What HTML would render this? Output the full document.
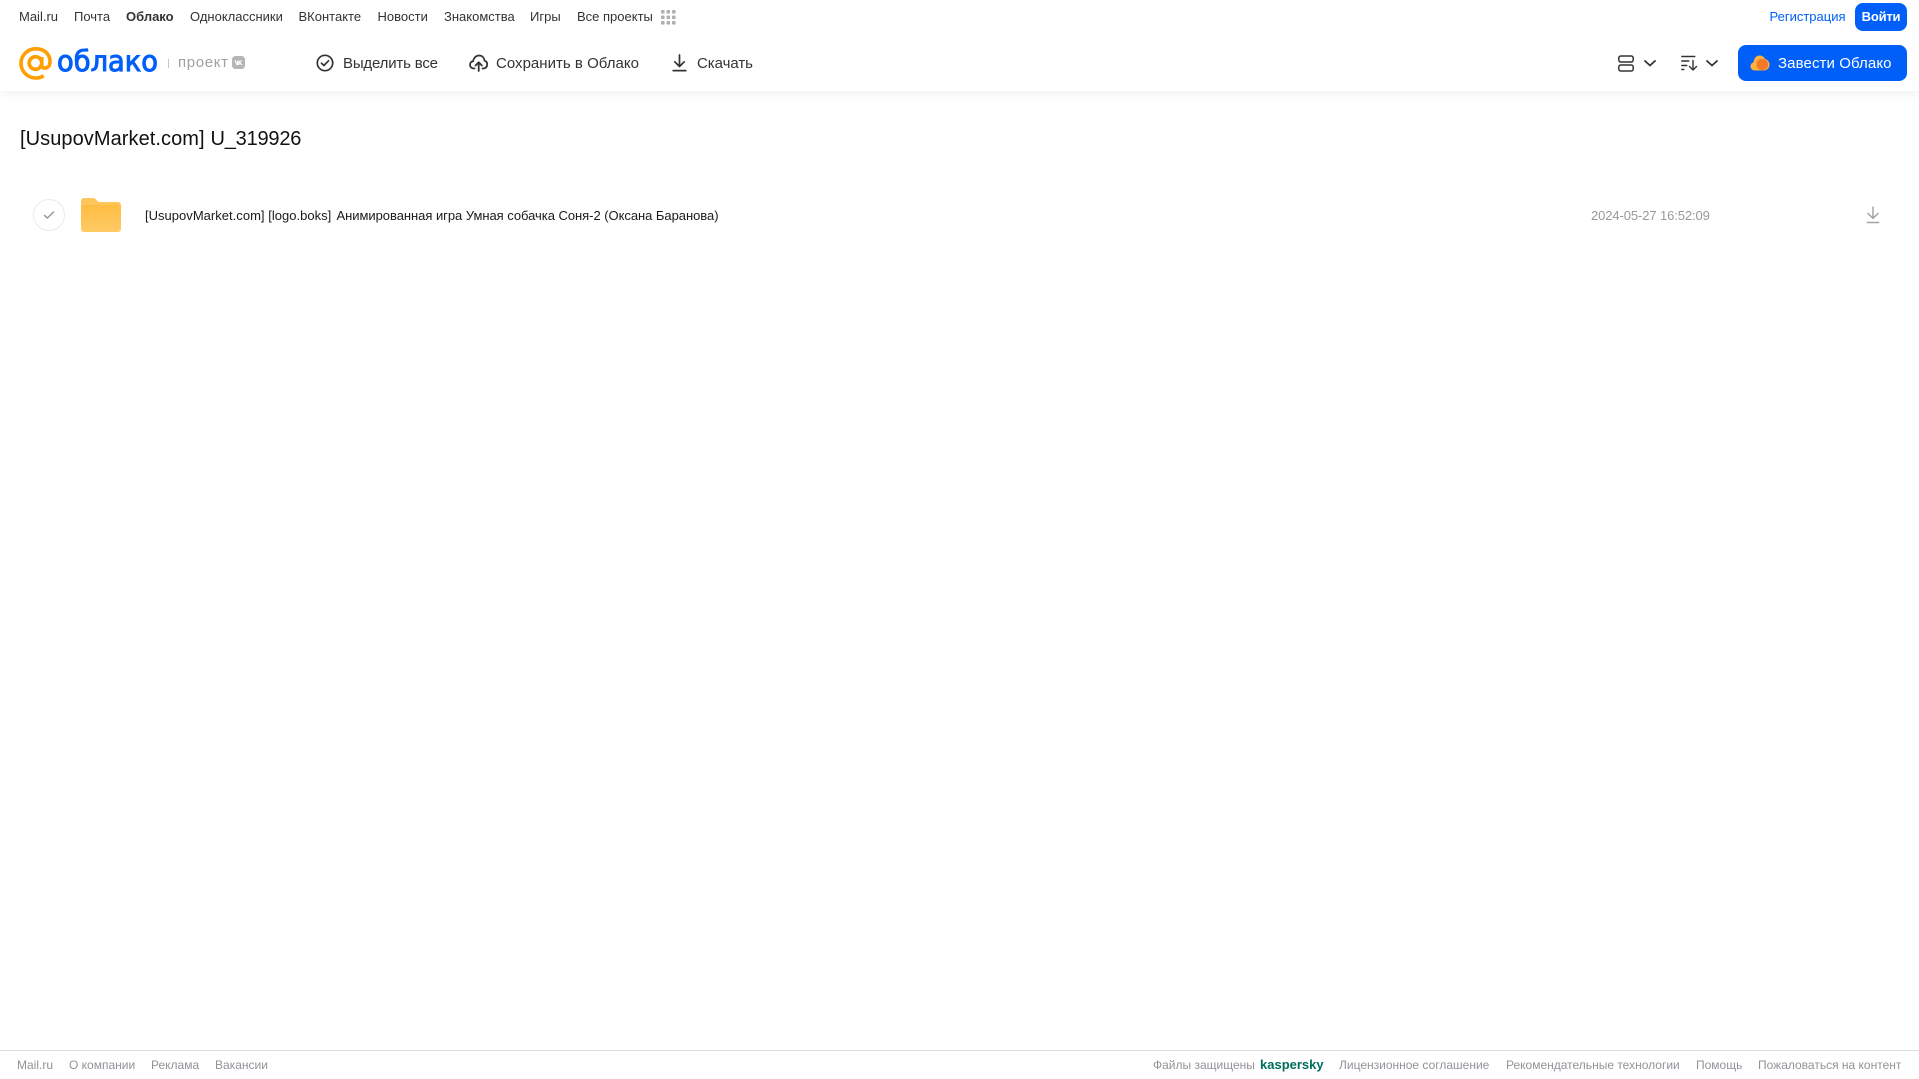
<!DOCTYPE html>
<html lang="ru"><head><meta charset="utf-8"><title>Облако</title>
<style>
html,body{margin:0;padding:0;width:1919px;height:1079px;overflow:hidden;background:#fff;font-family:"Liberation Sans",Arial,sans-serif}
.a{position:absolute;white-space:nowrap}
.n{top:9px;font-size:13px;line-height:16px;color:#333}
.t{top:55px;font-size:15px;line-height:18px;color:#333}
.f{top:1058px;font-size:12px;line-height:14px;color:#919399}
svg{position:absolute;overflow:visible}
</style></head><body>
<div class="a" style="left:0;top:0;width:1919px;height:91px;background:#fff;box-shadow:0 2px 10px rgba(0,0,0,.07)"></div>
<span class="a n" style="left:19px">Mail.ru</span>
<span class="a n" style="left:74px">Почта</span>
<span class="a n" style="left:126px;font-weight:bold">Облако</span>
<span class="a n" style="left:190px">Одноклассники</span>
<span class="a n" style="left:298.500px">ВКонтакте</span>
<span class="a n" style="left:377.500px">Новости</span>
<span class="a n" style="left:444px">Знакомства</span>
<span class="a n" style="left:530px">Игры</span>
<span class="a n" style="left:577px">Все проекты</span>
<svg style="left:661px;top:10px" width="15" height="15" fill="#b0b0b0"><rect x="0" y="0" width="3.6" height="3.6" rx="1"/><rect x="5.5" y="0" width="3.6" height="3.6" rx="1"/><rect x="11" y="0" width="3.6" height="3.6" rx="1"/><rect x="0" y="5.5" width="3.6" height="3.6" rx="1"/><rect x="5.5" y="5.5" width="3.6" height="3.6" rx="1"/><rect x="11" y="5.5" width="3.6" height="3.6" rx="1"/><rect x="0" y="11" width="3.6" height="3.6" rx="1"/><rect x="5.5" y="11" width="3.6" height="3.6" rx="1"/><rect x="11" y="11" width="3.6" height="3.6" rx="1"/></svg>

<!-- logo -->
<svg style="left:19px;top:47px" width="33" height="33" viewBox="0 0 33 33" fill="none" stroke="#ff9e00" stroke-width="3.6"><circle cx="16.500" cy="16" r="6.300"/><path d="M22.800 10v8.400c0 3.600 5.600 3.600 7.600-.2 2.400-7.400-2.400-16.400-13.600-16.400C8.600 1.800 2 8.200 2 16.200c0 8.400 6.800 14.800 14.800 14.800 3 0 5.600-.8 7.800-2.200"/></svg>
<svg style="left:57px;top:42px" width="104" height="40"><text x="0" y="29" font-family="DejaVu Sans,sans-serif" font-size="28.500" fill="#005ff9" stroke="#005ff9" stroke-width="1" textLength="101" lengthAdjust="spacingAndGlyphs">облако</text></svg>
<div class="a" style="left:168px;top:59px;width:1px;height:9px;background:#c4c4c4"></div>
<span class="a" style="left:178px;top:54px;font-size:15px;line-height:18px;color:#a0a0a0;letter-spacing:.65px">проект</span>
<svg style="left:232px;top:56px" width="13" height="13"><rect width="13" height="13" rx="3.500" fill="#b5b5b5"/><path d="M3 4.500l1.800 4h.8V4.500M9.800 4.500L7.500 6.500l2.500 2.500M7 4.500v4.500" stroke="#fff" stroke-width="1.100" fill="none"/></svg>

<!-- toolbar -->
<svg style="left:316px;top:54px" width="18" height="18" fill="none" stroke="#333" stroke-width="1.700"><circle cx="9" cy="9" r="7.700"/><path d="M5.500 9.200l2.400 2.300 4.600-4.700" stroke-linecap="round" stroke-linejoin="round"/></svg>
<span class="a t" style="left:343px;letter-spacing:-.18px">Выделить все</span>
<svg style="left:469px;top:54px" width="19" height="18" fill="none" stroke="#333" stroke-width="1.800" stroke-linecap="round" stroke-linejoin="round"><path d="M5.500 14.500H4.800C2.500 14.500 1 12.800 1 10.800c0-1.900 1.300-3.300 3.100-3.600C4.600 4 7 1.500 10 1.500c3.200 0 5.200 2.200 5.600 5.200 1.700.5 2.600 2 2.600 3.700 0 2.200-1.500 4.100-3.900 4.100h-.8"/><path d="M9.700 17V8.500M6.500 11.500l3.200-3.200 3.200 3.200"/></svg>
<span class="a t" style="left:496px;letter-spacing:.02px">Сохранить в Облако</span>
<svg style="left:671.500px;top:54px" width="15" height="18" fill="none" stroke="#333" stroke-width="1.700" stroke-linecap="round" stroke-linejoin="round"><path d="M7.500 1v11M2.800 7.800l4.700 4.700 4.700-4.700"/><path d="M1.200 16.600h12.600"/></svg>
<span class="a t" style="left:697px;letter-spacing:-.05px">Скачать</span>

<!-- right side -->
<span class="a n" style="left:1769.500px;color:#005ff9">Регистрация</span>
<div class="a" style="left:1855px;top:3px;width:52px;height:28px;border-radius:8px;background:#005ff9;color:#fff;font-size:13px;line-height:28px;text-align:center;font-weight:bold;letter-spacing:-.2px">Войти</div>
<svg style="left:1618px;top:55px" width="16" height="17" fill="none" stroke="#333" stroke-width="1.500"><rect x=".8" y="1" width="14.400" height="6" rx="2"/><rect x=".8" y="10" width="14.400" height="6" rx="2"/></svg>
<svg style="left:1644px;top:60px" width="12" height="7" fill="none" stroke="#333" stroke-width="1.800" stroke-linecap="round" stroke-linejoin="round"><path d="M1 1l5 4.500L11 1"/></svg>
<svg style="left:1681px;top:55px" width="17" height="16" fill="none" stroke="#333" stroke-width="1.400" stroke-linecap="round" stroke-linejoin="round"><path d="M.8 1.500h13M.8 6h7M.8 10.500h5M.8 14.500h2"/><path d="M12 5.500v9.500M8.500 11.500l3.500 3.500 3.500-3.500"/></svg>
<svg style="left:1706px;top:60px" width="12" height="7" fill="none" stroke="#333" stroke-width="1.800" stroke-linecap="round" stroke-linejoin="round"><path d="M1 1l5 4.500L11 1"/></svg>
<div class="a" style="left:1738px;top:45px;width:169px;height:36px;border-radius:8px;background:#005ff9"></div>
<svg style="left:1750px;top:54px" width="20" height="17"><path d="M5 16.500C2 16.500 .5 14.500 .5 12.300c0-2 1.300-3.500 3-3.900C4 4 6.500 1.500 9.500 1.500c2.500 0 4.500 1.300 5.500 3.500 2.800.5 4.500 3 4.500 5.800 0 3.200-2.500 5.700-5.500 5.700z" fill="#ffb13d"/><circle cx="12.300" cy="10.500" r="5.800" fill="#f5792a"/></svg>
<span class="a" style="left:1778px;top:55px;font-size:15px;line-height:18px;color:#fff;letter-spacing:.1px">Завести Облако</span>

<!-- content -->
<div class="a" style="left:20px;top:125.500px;font-size:20px;line-height:26px;color:#111;letter-spacing:.07px">[UsupovMarket.com]</div>
<div class="a" style="left:210.500px;top:125.500px;font-size:20px;line-height:26px;color:#111;letter-spacing:-.2px">U_319926</div>
<div class="a" style="left:33px;top:199px;width:30px;height:30px;border:1px solid #ebebeb;border-radius:50%"></div>
<svg style="left:43px;top:210px" width="12" height="10" fill="none" stroke="#999" stroke-width="1.500" stroke-linecap="round" stroke-linejoin="round"><path d="M1.500 5.500L4.500 8l6-6"/></svg>
<svg style="left:81px;top:198px" width="40" height="34"><defs><linearGradient id="g" x1="0" y1="0" x2="0" y2="1"><stop offset="0" stop-color="#ffbc42"/><stop offset="1" stop-color="#ffcb66"/></linearGradient></defs><path d="M0 3a3 3 0 0 1 3-3h9c2 0 3 1 4 2.500L18 4h19a3 3 0 0 1 3 3v10H0z" fill="#ffc65c"/><path d="M0 9a2 2 0 0 1 2-2h36a2 2 0 0 1 2 2v22a3 3 0 0 1-3 3H3a3 3 0 0 1-3-3z" fill="url(#g)"/></svg>
<span class="a" style="left:145px;top:208px;font-size:13px;line-height:16px;color:#1a1a1a;letter-spacing:.02px">[UsupovMarket.com] [logo.boks]</span>
<span class="a" style="left:336.500px;top:208px;font-size:13px;line-height:16px;color:#1a1a1a;letter-spacing:-.04px">Анимированная игра Умная собачка Соня-2 (Оксана Баранова)</span>
<span class="a" style="left:1591px;top:208px;font-size:13px;line-height:16px;color:#999;letter-spacing:-.1px">2024-05-27 16:52:09</span>
<svg style="left:1866px;top:206px" width="14" height="18" fill="none" stroke="#a5a5a5" stroke-width="1.500"><path d="M7 .5v11.500M1.500 7L7 12.300 12.500 7"/><path d="M.8 16.500h12.400"/></svg>

<!-- footer -->
<div class="a" style="left:0;top:1050px;width:1919px;height:1px;background:#dcdcdc"></div>
<span class="a f" style="left:17px">Mail.ru</span>
<span class="a f" style="left:69px">О компании</span>
<span class="a f" style="left:151px">Реклама</span>
<span class="a f" style="left:215px">Вакансии</span>
<span class="a f" style="left:1153px">Файлы защищены</span>
<span class="a f" style="left:1260px;color:#006d5c;font-weight:bold;font-size:13px">kaspersky</span>
<span class="a f" style="left:1339px">Лицензионное соглашение</span>
<span class="a f" style="left:1506px">Рекомендательные технологии</span>
<span class="a f" style="left:1696px">Помощь</span>
<span class="a f" style="left:1758px">Пожаловаться на контент</span>
</body></html>
